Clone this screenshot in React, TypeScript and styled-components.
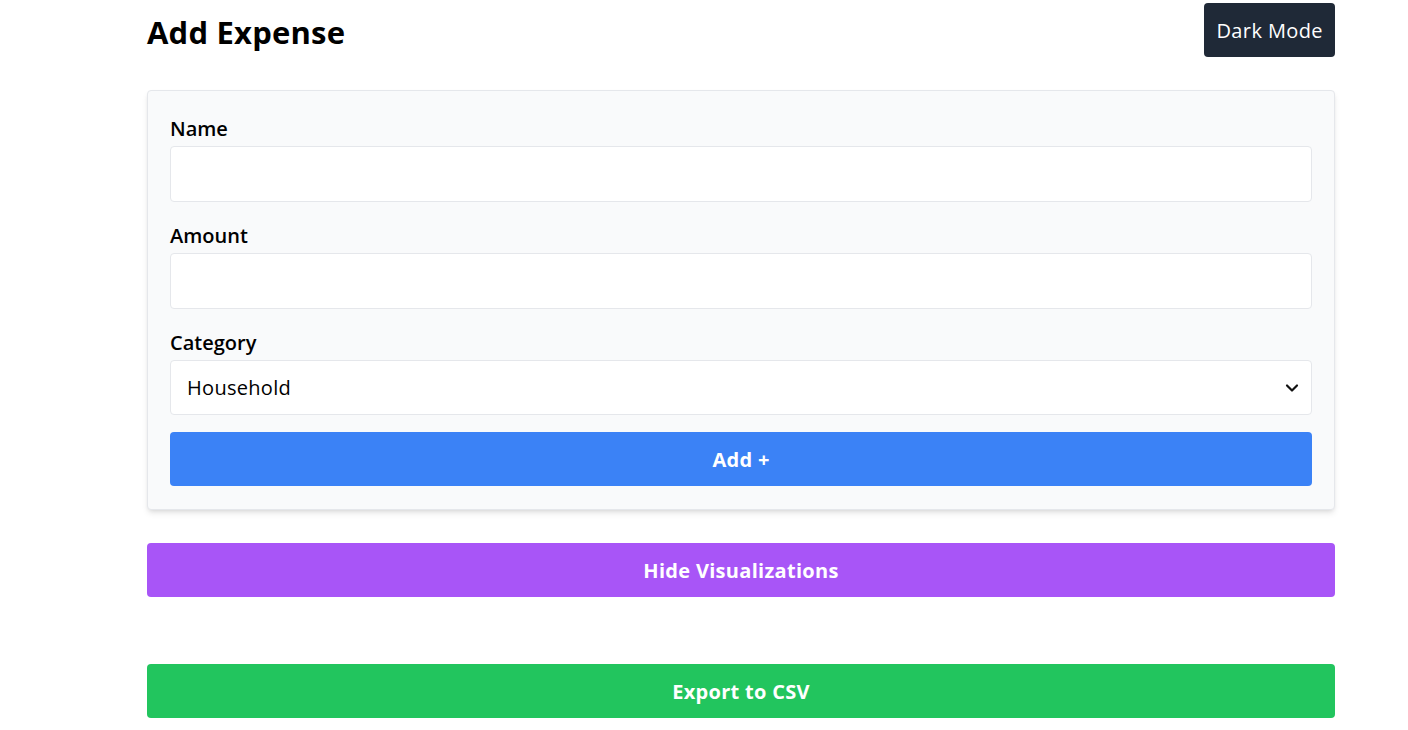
import React, { useState } from "react";
import styled, { createGlobalStyle } from "styled-components";

const GlobalStyle = createGlobalStyle`
  html, body {
    margin: 0;
    padding: 0;
    background: #ffffff;
    font-family: "Open Sans", "Noto Sans", sans-serif;
    color: #000000;
  }
  * {
    box-sizing: border-box;
  }
`;

const Page = styled.div`
  width: 1188px;
  margin-left: 147px;
  padding-top: 3px;
`;

const Header = styled.header`
  display: flex;
  align-items: center;
  justify-content: space-between;
  height: 54px;
  margin-bottom: 33px;
`;

const Title = styled.h1`
  margin: 0;
  font-size: 31px;
  line-height: 36px;
  font-weight: 700;
  letter-spacing: 0.2px;
  padding-top: 4px;
`;

const ThemeButton = styled.button`
  height: 54px;
  padding: 0 12px;
  border: none;
  border-radius: 4px;
  background: #1f2937;
  color: #ffffff;
  font-family: inherit;
  font-size: 20px;
  letter-spacing: 0.4px;
  cursor: pointer;
`;

const Card = styled.form`
  background: #f9fafb;
  border: 1px solid #e5e7eb;
  border-radius: 4px;
  box-shadow: 0 4px 6px -1px rgba(0, 0, 0, 0.1), 0 2px 4px -2px rgba(0, 0, 0, 0.1);
  padding: 24px 22px 23px;
  margin-bottom: 33px;
`;

const Field = styled.div`
  display: flex;
  flex-direction: column;
  margin-bottom: 20px;
`;

const Label = styled.label`
  font-size: 20px;
  line-height: 28px;
  font-weight: 600;
  margin-bottom: 3px;
`;

const Input = styled.input`
  height: 56px;
  border: 1px solid #e5e7eb;
  border-radius: 4px;
  background: #ffffff;
  padding: 0 16px;
  font-family: inherit;
  font-size: 20px;
  outline: none;
`;

const SelectWrap = styled.div`
  position: relative;
`;

const Select = styled.select`
  width: 100%;
  height: 55px;
  appearance: none;
  border: 1px solid #e5e7eb;
  border-radius: 4px;
  background: #ffffff;
  padding: 0 16px;
  font-family: inherit;
  font-size: 20px;
  letter-spacing: 0.3px;
  color: #000000;
  outline: none;
`;

const Chevron = styled.svg`
  position: absolute;
  right: 13px;
  top: 50%;
  transform: translateY(-50%);
  pointer-events: none;
`;

const ActionButton = styled.button<{ $bg: string }>`
  display: block;
  width: 100%;
  height: 54px;
  border: none;
  border-radius: 4px;
  background: ${(p) => p.$bg};
  color: #ffffff;
  font-family: inherit;
  font-size: 20px;
  font-weight: 700;
  letter-spacing: 0.3px;
  cursor: pointer;
`;

const AddButton = styled(ActionButton)`
  margin-top: -3px;
`;

const Spacer = styled.div`
  height: 67px;
`;

const categories = ["Household", "Food", "Transport", "Entertainment", "Other"];

export default function App() {
  const [category, setCategory] = useState("Household");

  return (
    <>
      <GlobalStyle />
      <Page>
        <Header>
          <Title>Add Expense</Title>
          <ThemeButton type="button">Dark Mode</ThemeButton>
        </Header>

        <Card onSubmit={(e) => e.preventDefault()}>
          <Field>
            <Label htmlFor="name">Name</Label>
            <Input id="name" type="text" />
          </Field>
          <Field>
            <Label htmlFor="amount">Amount</Label>
            <Input id="amount" type="number" />
          </Field>
          <Field>
            <Label htmlFor="category">Category</Label>
            <SelectWrap>
              <Select id="category" value={category} onChange={(e) => setCategory(e.target.value)}>
                {categories.map((c) => (
                  <option key={c} value={c}>
                    {c}
                  </option>
                ))}
              </Select>
              <Chevron width="14" height="14" viewBox="0 0 14 14" fill="none">
                <path d="M2 4.5 L7 9.5 L12 4.5" stroke="#111" strokeWidth="2.2" strokeLinecap="round" strokeLinejoin="round" />
              </Chevron>
            </SelectWrap>
          </Field>
          <AddButton type="submit" $bg="#3b82f6">Add +</AddButton>
        </Card>

        <ActionButton type="button" $bg="#a855f7">Hide Visualizations</ActionButton>
        <Spacer />
        <ActionButton type="button" $bg="#22c55e">Export to CSV</ActionButton>
      </Page>
    </>
  );
}
